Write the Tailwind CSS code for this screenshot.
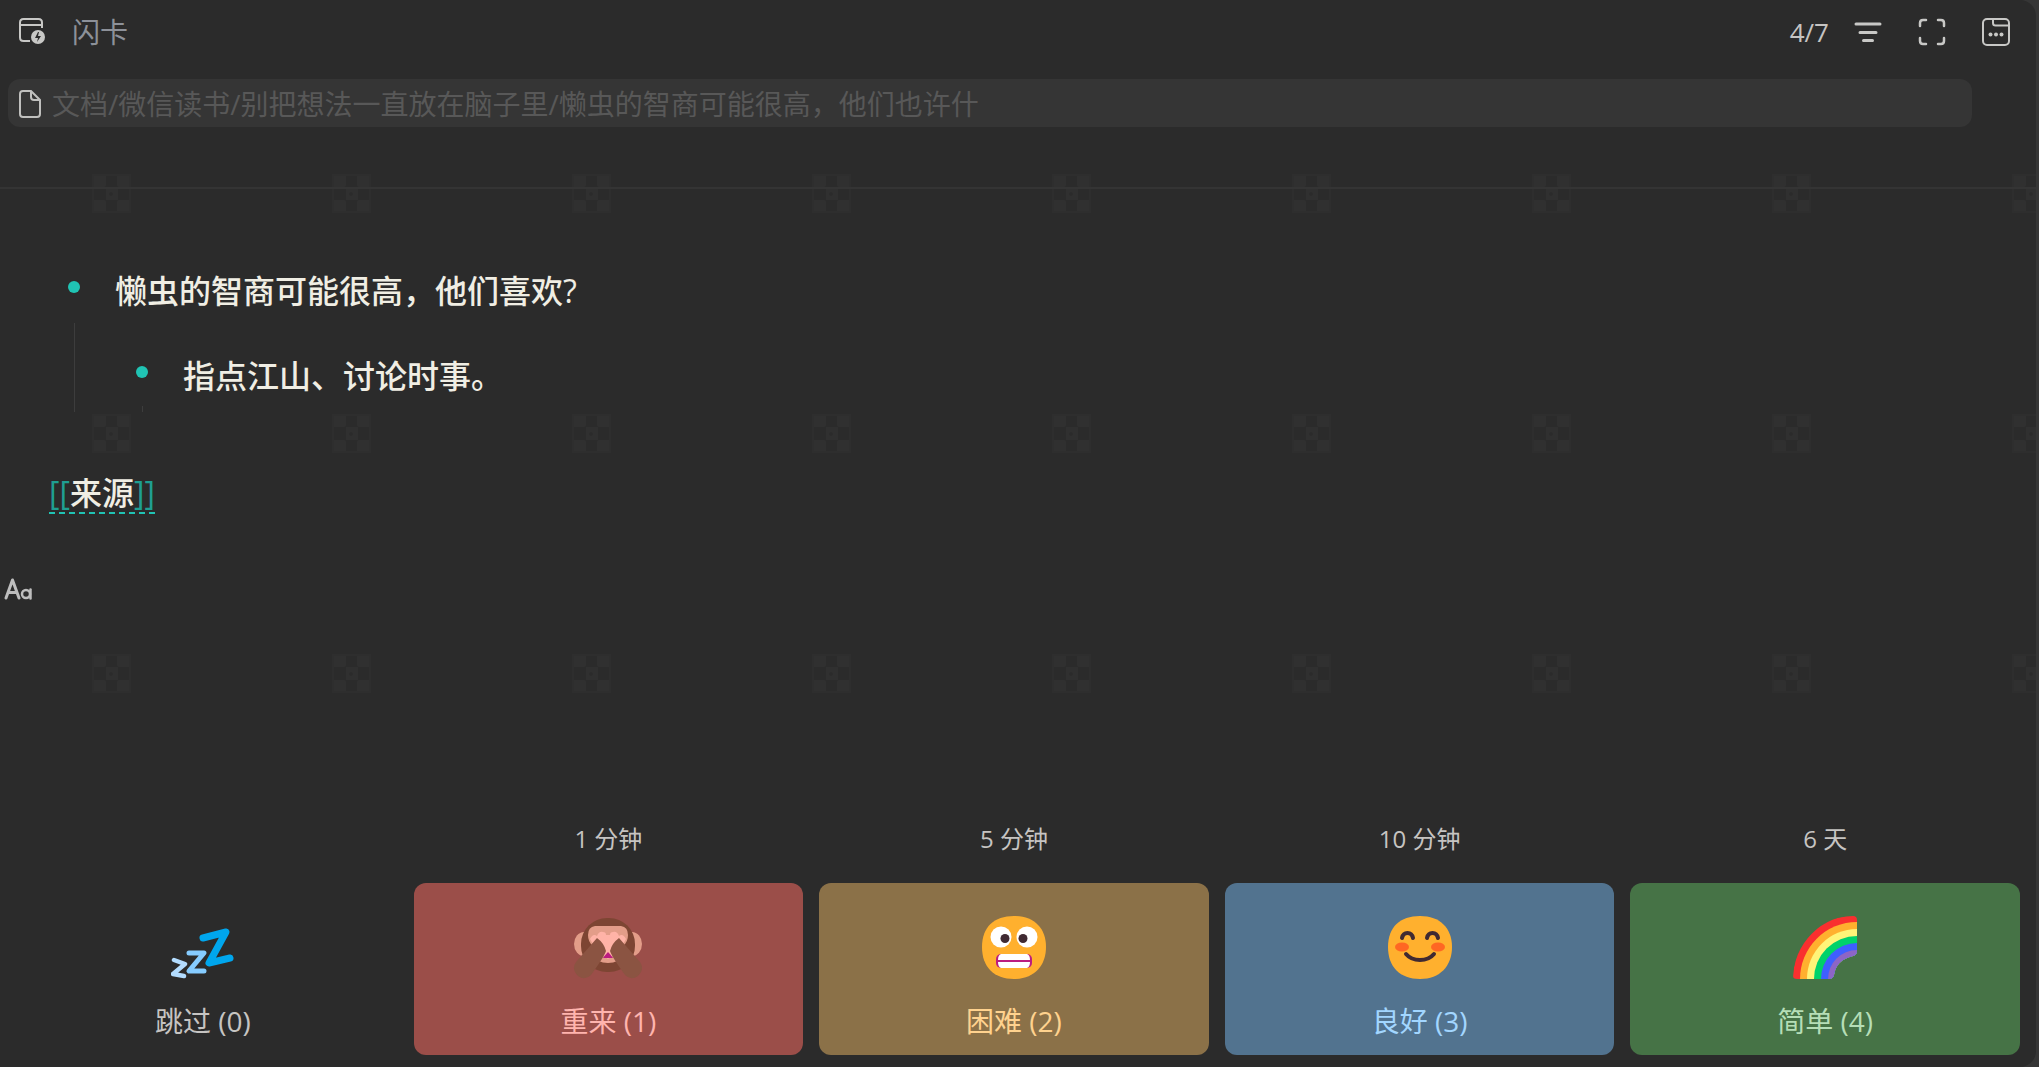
<!DOCTYPE html>
<html lang="zh-CN">
<head>
<meta charset="utf-8">
<title>闪卡</title>
<script src="https://cdn.jsdelivr.net/npm/@tailwindcss/browser@4"></script>
</head>
<body class="bg-[#363636] font-['Open_Sans','Noto_Sans_CJK_SC',sans-serif]">
<div class="relative isolate mr-[3px] flex min-h-screen flex-col overflow-hidden rounded-r-2xl bg-[#2b2b2b] text-[#c6c4c2]">
  <svg class="absolute inset-0 -z-10 size-full" aria-hidden="true">
    <defs>
      <pattern id="tile" x="92" y="174" width="240" height="240" patternUnits="userSpaceOnUse">
        <g fill="#303030">
          <rect width="14" height="13" rx="3"/><rect x="25" width="14" height="13" rx="3"/>
          <rect y="26" width="14" height="13" rx="3"/><rect x="25" y="26" width="14" height="13" rx="3"/>
          <rect x="14" y="13" width="12" height="13"/>
        </g>
        <rect x="1" y="1" width="37" height="37" fill="none" stroke="#2e2e2e" stroke-width="2"/>
        <circle cx="19" cy="20" r="2" fill="#2b2b2b"/>
      </pattern>
    </defs>
    <rect y="100" width="100%" height="620" fill="url(#tile)"/>
  </svg>

  <header class="flex h-[62px] items-center pt-px pl-[18px] pr-[25px]">
    <svg class="size-7" viewBox="0 0 28 28" fill="none" stroke="#c8c8c6" stroke-width="2" aria-hidden="true">
      <path d="M12 23H5.500Q2 23 2 19.500V4.500Q2 1 5.500 1H20.500Q24 1 24 4.500V10M2 7H24"/>
      <circle cx="20" cy="19" r="7" fill="#c8c8c6" stroke="none"/>
      <path d="M20 14L17 20h3l-1 4 4-6h-3l1-4z" fill="#2b2b2b" stroke="none"/>
    </svg>
    <h1 class="ml-[26px] text-[28px] leading-9 text-[#8d9199]">闪卡</h1>
    <div class="ml-auto flex items-center">
      <span class="mr-6 text-[26px] leading-9">4/7</span>
      <button class="mr-[34px]" aria-label="筛选">
        <svg class="size-[30px]" viewBox="0 0 30 30" stroke="#c8c8c6" stroke-width="3" stroke-linecap="round"><path d="M3 7H27M7 15.500H23M10.500 23.500H19.500"/></svg>
      </button>
      <button class="mr-[34px]" aria-label="全屏">
        <svg class="size-[30px]" viewBox="0 0 30 30" fill="none" stroke="#c8c8c6" stroke-width="2.500" stroke-linecap="round"><path d="M3 9V6Q3 3 6 3H9M21 3H24Q27 3 27 6V9M27 21V24Q27 27 24 27H21M9 27H6Q3 27 3 24V21"/></svg>
      </button>
      <button aria-label="更多">
        <svg class="size-[30px]" viewBox="0 0 30 30" fill="none" stroke="#c8c8c6" stroke-width="2"><rect x="2" y="2" width="26" height="26" rx="4"/><path d="M12 2V6Q12 8.500 14.500 8.500H28"/><g fill="#c8c8c6" stroke="none"><circle cx="9.500" cy="17.500" r="2"/><circle cx="15" cy="17.500" r="2"/><circle cx="20.500" cy="17.500" r="2"/></g></svg>
      </button>
    </div>
  </header>

  <nav class="border-b-2 border-[#343434] pt-[17px] pr-16 pb-[60px] pl-2">
    <a href="#" class="flex h-12 items-center rounded-xl bg-[#353535] pt-px pl-[10px] text-[28px] leading-9 text-[#585858]">
      <svg class="mr-[10px] h-7 w-6 shrink-0" viewBox="0 0 24 28" fill="none" stroke="#c0c0be" stroke-width="2" aria-hidden="true"><path d="M13 1H5Q2 1 2 4V24Q2 27 5 27H19Q22 27 22 24V10ZM13 1V7Q13 10 16 10H22"/></svg>
      <span class="truncate">文档/微信读书/别把想法一直放在脑子里/懒虫的智商可能很高，他们也许什</span>
    </a>
  </nav>

  <main class="pt-[76px] text-[32px] leading-[52px] text-[#f0eee4]">
    <ul class="pl-[68px]">
      <li>
        <div class="flex items-center"><span class="mb-2 size-3 rounded-full bg-[#20c4b4]"></span><span class="ml-[35px] font-medium">懒虫的智商可能很高，他们喜欢?</span></div>
        <ul class="mt-[6px] ml-[6px] border-l border-[#3d3d3d] pt-[27px] pl-[61px]">
          <li>
            <div class="flex items-center"><span class="mb-2 size-3 rounded-full bg-[#20c4b4]"></span><span class="ml-[35px] font-medium">指点江山、讨论时事。</span></div>
            <div class="mt-1 ml-[6px] h-[6px] w-px bg-[#3d3d3d]"></div>
          </li>
        </ul>
      </li>
    </ul>
    <p class="mt-[62px] flex pl-[49px]">
      <a href="#" class="border-b-2 border-dashed border-[#20c4b4] leading-[38px] font-medium"><span class="font-normal text-[#1f9f92]">[[</span>来源<span class="font-normal text-[#1f9f92]">]]</span></a>
    </p>
    <button class="mt-[60px] ml-1 block" aria-label="字体">
      <svg class="h-[30px] w-7" viewBox="0 0 28 30" fill="none" stroke="#bdbdbd" stroke-width="3" stroke-linecap="round" stroke-linejoin="round"><path d="M2 24L8.500 6L15 24M4.500 18.500H12.500"/><circle cx="22" cy="20" r="4" stroke-width="2.500"/><path d="M26.500 15.500V24.500" stroke-width="2.500"/></svg>
    </button>
  </main>

  <footer class="mt-auto grid grid-cols-5 gap-4 pr-4 pb-3 pl-2 text-center text-[28px] leading-9">
    <div class="flex flex-col justify-end">
      <button class="flex h-[172px] flex-col items-center gap-6 rounded-xl pt-8">
        <svg class="size-16" viewBox="0 -3 64 64" fill="none" stroke-linecap="round" stroke-linejoin="round" aria-hidden="true"><path d="M3 42L14 46L2 56L13 58" stroke="#b3dcff" stroke-width="4.500"/><path d="M18 35H33L18 53H33" stroke="#86ccff" stroke-width="5"/><path d="M32 20L55 14L38 45L59 40" stroke="#00a6ed" stroke-width="7"/></svg>
        <span>跳过 (0)</span>
      </button>
    </div>
    <div class="flex flex-col gap-[26px]">
      <span class="text-2xl leading-9">1 分钟</span>
      <button class="flex h-[172px] flex-col items-center gap-6 rounded-xl bg-[#9b4e49] pt-8 text-[#ffb4ae]">
        <svg class="h-16 w-[70px]" viewBox="0 0 70 64" aria-hidden="true">
          <ellipse cx="11" cy="29" rx="10" ry="12" fill="#e39d89"/><ellipse cx="59" cy="29" rx="10" ry="12" fill="#e39d89"/>
          <rect x="8" y="3" width="54" height="54" rx="26" fill="#7d4533"/>
          <path d="M22 11H48Q55 12 55 20Q55 27 50 31V40Q46 48 35 48T20 40V31Q15 27 15 20Q15 12 22 11Z" fill="#e39d89"/>
          <path d="M17 24Q20 18 24 21Q26 16 30 17Q33 17 33 20H37Q37 17 40 17Q44 16 46 21Q50 18 53 24L46 36L35 44L24 36Z" fill="#ffb3a7"/>
          <path d="M30 43Q33 39 35 37Q37 39 40 43Z" fill="#bb1d80"/>
          <path d="M24 23Q31 28 33 36Q31 42 18 60Q12 66 5 61Q-2 54 3 47ZM46 23Q39 28 37 36Q39 42 52 60Q58 66 65 61Q72 54 67 47Z" fill="#8b5442"/>
        </svg>
        <span>重来 (1)</span>
      </button>
    </div>
    <div class="flex flex-col gap-[26px]">
      <span class="text-2xl leading-9">5 分钟</span>
      <button class="flex h-[172px] flex-col items-center gap-6 rounded-xl bg-[#8b7148] pt-8 text-[#ffd28e]">
        <svg class="size-16" viewBox="0 0 64 64" aria-hidden="true">
          <path d="M32 1C52 1 64 13 64 32S52 64 32 64S0 52 0 32S12 1 32 1Z" fill="#ffb02e"/>
          <circle cx="19" cy="22" r="10.500" fill="#fff"/><circle cx="45" cy="22" r="10.500" fill="#fff"/>
          <circle cx="23" cy="23.500" r="4.500" fill="#402a32"/><circle cx="41" cy="23.500" r="4.500" fill="#402a32"/>
          <rect x="14" y="39" width="36" height="14" rx="5" fill="#bb1d80"/><path d="M19 39H45Q48 40 48 45H16Q16 40 19 39ZM16 47H48Q48 52 45 53H19Q16 52 16 47Z" fill="#fff"/>
        </svg>
        <span>困难 (2)</span>
      </button>
    </div>
    <div class="flex flex-col gap-[26px]">
      <span class="text-2xl leading-9">10 分钟</span>
      <button class="flex h-[172px] flex-col items-center gap-6 rounded-xl bg-[#52738f] pt-8 text-[#a2d6ff]">
        <svg class="size-16" viewBox="0 0 64 64" aria-hidden="true">
          <path d="M32 1C52 1 64 13 64 32S52 64 32 64S0 52 0 32S12 1 32 1Z" fill="#ffb02e"/>
          <ellipse cx="14" cy="32" rx="7" ry="4.500" fill="#ff6723"/><ellipse cx="50" cy="32" rx="7" ry="4.500" fill="#ff6723"/>
          <path d="M14 23Q15 18 19.500 18T25 23M39 23Q40 18 44.500 18T50 23M18 39Q23 45 32 45T46 39" fill="none" stroke="#402a32" stroke-width="4" stroke-linecap="round"/>
        </svg>
        <span>良好 (3)</span>
      </button>
    </div>
    <div class="flex flex-col gap-[26px]">
      <span class="text-2xl leading-9">6 天</span>
      <button class="flex h-[172px] flex-col items-center gap-6 rounded-xl bg-[#467346] pt-8 text-[#b5deb6]">
        <svg class="size-16" viewBox="0 0 64 64" aria-hidden="true">
          <defs><clipPath id="arch"><path d="M0 61Q0 64 4 64H36Q40 64 41 60Q43 45 60 41Q64 40 64 36V5Q64 1 60 1Q4 3 0 61Z"/></clipPath></defs>
          <g clip-path="url(#arch)"><circle cx="64" cy="64" r="64" fill="#f92f2f"/><circle cx="64" cy="64" r="57" fill="#ffb02e"/><circle cx="64" cy="64" r="50" fill="#fff478"/><circle cx="64" cy="64" r="43" fill="#00d26a"/><circle cx="64" cy="64" r="36" fill="#3f5fff"/><circle cx="64" cy="64" r="29" fill="#8d65c5"/></g>
        </svg>
        <span>简单 (4)</span>
      </button>
    </div>
  </footer>
</div>
</body>
</html>
